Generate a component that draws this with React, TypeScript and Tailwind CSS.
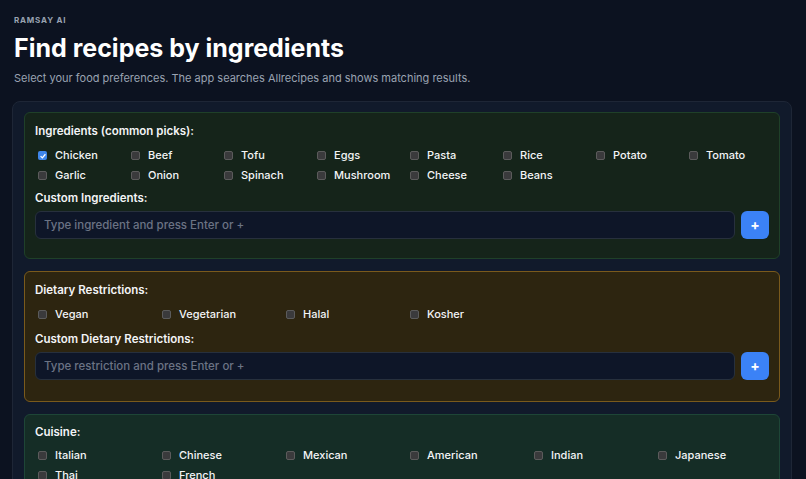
import React from "react";

const INGREDIENTS = [
	"Chicken",
	"Beef",
	"Tofu",
	"Eggs",
	"Pasta",
	"Rice",
	"Potato",
	"Tomato",
	"Garlic",
	"Onion",
	"Spinach",
	"Mushroom",
	"Cheese",
	"Beans",
];

const DIETS = ["Vegan", "Vegetarian", "Halal", "Kosher"];

const CUISINES = ["Italian", "Chinese", "Mexican", "American", "Indian", "Japanese", "Thai", "French"];

function Check({ label, checked }: { label: string; checked?: boolean }) {
	return (
		<label className="flex h-5 items-center gap-2 text-[11px] font-medium text-gray-100">
			<span
				className={
					checked
						? "ml-[3px] flex h-[9px] w-[9px] items-center justify-center rounded-[2px] bg-[#3f86ea]"
						: "ml-[3px] h-[9px] w-[9px] rounded-[2px] border border-[#5b5b5b] bg-[#3a3a3c]"
				}
			>
				{checked && (
					<svg viewBox="0 0 10 10" className="h-[8px] w-[8px]">
						<path d="M2 5.2 L4.2 7.3 L8 2.8" fill="none" stroke="#fff" strokeWidth="1.6" />
					</svg>
				)}
			</span>
			<span>{label}</span>
		</label>
	);
}

function AddInput({ placeholder }: { placeholder: string }) {
	return (
		<div className="mt-[5px] flex gap-[6px]">
			<input
				type="text"
				placeholder={placeholder}
				className="h-[28px] flex-1 rounded-md border border-[#27303d] bg-[#0e1628] px-[8px] text-[11.5px] font-medium text-gray-200 placeholder:text-[#6b7384] outline-none"
			/>
			<button className="flex h-[28px] w-[28px] items-center justify-center rounded-md bg-[#3b82f6] text-[14px] font-bold text-white">
				+
			</button>
		</div>
	);
}

export default function App() {
	return (
		<div className="min-h-screen bg-[#0c1220] pr-[14px] pl-[12px] pt-[14px] font-['Inter',sans-serif] text-gray-100">
			<div className="px-[2px] text-[8px] font-bold tracking-[0.1em] text-[#9aa3b2]">RAMSAY AI</div>
			<h1 className="mt-[6px] px-[2px] text-[25px] font-bold leading-[32px] text-white">
				Find recipes by ingredients
			</h1>
			<p className="mt-[6px] px-[2px] text-[11px] text-[#9aa3b2]">
				Select your food preferences. The app searches Allrecipes and shows matching results.
			</p>

			<div className="mt-[14px] flex flex-col gap-[12px] rounded-lg border border-[#1e2636] bg-[#111a2b] px-[11px] pt-[10px] pb-4">
				<section className="rounded-md border border-[#1f4029] bg-[#15241a] px-[10px] pt-[10px] pb-[19px]">
					<div className="text-[11.5px] font-semibold leading-4">Ingredients (common picks):</div>
					<div className="mt-[7px] grid grid-cols-8 gap-x-[10px]">
						{INGREDIENTS.map((i) => (
							<Check key={i} label={i} checked={i === "Chicken"} />
						))}
					</div>
					<div className="mt-[4px] text-[11.5px] font-semibold leading-4">Custom Ingredients:</div>
					<AddInput placeholder="Type ingredient and press Enter or +" />
				</section>

				<section className="rounded-md border border-[#7a5a1c] bg-[#2d2510] px-[10px] pt-[10px] pb-[21px]">
					<div className="text-[11.5px] font-semibold leading-4">Dietary Restrictions:</div>
					<div className="mt-[7px] grid grid-cols-6 gap-x-[10px]">
						{DIETS.map((d) => (
							<Check key={d} label={d} />
						))}
					</div>
					<div className="mt-[6px] text-[11.5px] font-semibold leading-4">Custom Dietary Restrictions:</div>
					<AddInput placeholder="Type restriction and press Enter or +" />
				</section>

				<section className="rounded-md border border-[#1e4637] bg-[#152d26] px-[10px] pt-[9px] pb-[19px]">
					<div className="text-[11.5px] font-semibold leading-4">Cuisine:</div>
					<div className="mt-[6px] grid grid-cols-6 gap-x-[10px]">
						{CUISINES.map((c) => (
							<Check key={c} label={c} />
						))}
					</div>
				</section>
			</div>
		</div>
	);
}
